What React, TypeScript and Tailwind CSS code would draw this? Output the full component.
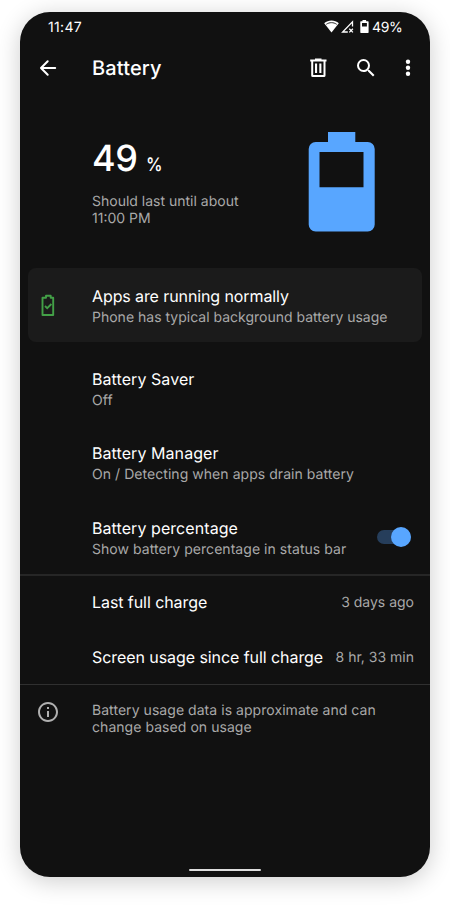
import type { ReactNode } from "react";

function StatusBar() {
  return (
    <div className="flex h-[30px] shrink-0 items-center justify-between pr-[28px] pl-[28px] text-[14px] leading-[17px] text-white">
      <span className="tracking-[0.35px]">11:47</span>
      <div className="flex items-center">
        <svg className="mb-[2px]" width="15" height="13" viewBox="0 0 15 13" fill="none">
          <path d="M7.500 12.600 0.200 3.200C4.200-.300 10.800-.300 14.800 3.200Z" fill="#fff" />
          <path d="M2.300 4.300C5.500 2.100 9.500 2.100 12.700 4.300" stroke="#111" strokeWidth="0.9" />
        </svg>
        <svg className="mb-[2px] ml-[2px]" width="13" height="13" viewBox="0 0 13 13" fill="none">
          <path d="M11.500 6.500V1.800L1.600 12H6.800" stroke="#fff" strokeWidth="1.300" />
          <path d="m8.300 8.800 3.600 3.600m0-3.600-3.600 3.600" stroke="#fff" strokeWidth="1.300" />
        </svg>
        <svg className="mb-px ml-[6px]" width="9" height="13" viewBox="0 0 9 13" fill="#fff">
          <path
            fillRule="evenodd"
            d="M2.500 0h3.600v1.300H8a.6.6 0 0 1 .6.6v10.400a.6.6 0 0 1-.6.6H.9a.6.6 0 0 1-.6-.6V1.900a.6.6 0 0 1 .6-.6h1.600ZM2 3v3.400H6.900V3Z"
          />
        </svg>
        <span className="-mr-[0.500px] ml-[2.500px] tracking-[-0.3px]">49%</span>
      </div>
    </div>
  );
}

function Header() {
  return (
    <div className="flex h-[52px] shrink-0 items-center pl-[16px] text-white">
      <svg width="24" height="24" viewBox="0 0 24 24" fill="none" stroke="#fff" strokeWidth="2">
        <path d="M19.200 12H5.300M11.700 5.300 5 12l6.700 6.700" strokeLinecap="round" strokeLinejoin="round" />
      </svg>
      <h1 className="ml-[32px] flex-1 text-[20px] leading-6 font-medium tracking-[0.15px]">Battery</h1>
      <svg width="24" height="24" viewBox="0 0 24 24" fill="#fff">
        <path
          fillRule="evenodd"
          d="M9 2.500h6.500v1h5v2h-1v14a1.500 1.500 0 0 1-1.500 1.500H6.700a1.500 1.500 0 0 1-1.500-1.500v-14h-1v-2H9ZM7.200 5.500v13.500h10.300V5.500ZM9 7.500h2.100v9.500H9ZM13.300 7.500h2.100v9.500h-2.100Z"
        />
      </svg>
      <svg className="ml-[24px]" width="24" height="24" viewBox="0 0 24 24" fill="#fff">
        <path d="M15.500 14h-.79l-.28-.27A6.471 6.471 0 0 0 16 9.500 6.500 6.500 0 1 0 9.500 16c1.610 0 3.090-.59 4.230-1.570l.27.28v.79l5 4.990L20.490 19l-4.990-5zm-6 0C7.010 14 5 11.990 5 9.500S7.010 5 9.500 5 14 7.010 14 9.500 11.990 14 9.500 14z" />
      </svg>
      <svg className="mr-[10px] ml-[18px]" width="24" height="24" viewBox="0 0 24 24" fill="#fff">
        <circle cx="12" cy="5.800" r="2.200" />
        <circle cx="12" cy="11.800" r="2.200" />
        <circle cx="12" cy="17.800" r="2.200" />
      </svg>
    </div>
  );
}

function Hero() {
  return (
    <div className="flex h-[174px] shrink-0 justify-between pr-[55px] pl-[72px]">
      <div className="pt-[42px]">
        <div className="flex items-baseline text-white">
          <span className="text-[36px] leading-[44px] font-medium tracking-[-0.5px]">49</span>
          <span className="ml-[9px] origin-left scale-x-90 text-[18.500px] font-medium">%</span>
        </div>
        <p className="mt-[13px] text-[14px] leading-[17px] text-[#a9a9a9]">
          Should last until about
          <br />
          11:00 PM
        </p>
      </div>
      <svg className="mt-[38px]" width="67" height="100" viewBox="0 0 67 100" fill="#58a6ff">
        <path
          fillRule="evenodd"
          d="M20 0H47.300V10H59.700a7 7 0 0 1 7 7V92.500a7 7 0 0 1-7 7H7.700a7 7 0 0 1-7-7V17a7 7 0 0 1 7-7H20ZM11.500 20V55.300H55.500V20Z"
        />
      </svg>
    </div>
  );
}

function Item({ title, detail, end }: { title: string; detail: string; end?: ReactNode }) {
  return (
    <div className="flex h-[74.500px] shrink-0 items-start justify-between pt-[18px] pr-[19.500px] pl-[72px]">
      <div>
        <div className="text-[16px] leading-[19px] tracking-[0.07px] text-white">{title}</div>
        <div className="mt-[3px] text-[14px] leading-[17px] tracking-[0.05px] text-[#a9a9a9]">{detail}</div>
      </div>
      {end}
    </div>
  );
}

function Stat({ label, value }: { label: string; value: string }) {
  return (
    <div className="flex h-[55px] shrink-0 items-center justify-between pr-[16px] pl-[72px] first:h-[53px] last:pt-[1px]">
      <span className="text-[16px] leading-[19px] tracking-[-0.07px] text-white">{label}</span>
      <span className="text-[14px] leading-[17px] text-[#a9a9a9]">{value}</span>
    </div>
  );
}

function Toggle() {
  return (
    <div className="mt-[11px] flex h-[14px] w-[33.500px] items-center justify-end rounded-full bg-[#263e5b]">
      <div className="size-[20px] shrink-0 rounded-full bg-[#58a6ff]" />
    </div>
  );
}

export default function App() {
  return (
    <div className="h-[906px] w-[450px] overflow-hidden bg-white px-[20px] pt-[12px] font-['Inter',sans-serif] [text-rendering:geometricPrecision]">
      <main className="flex h-[865.300px] w-[410px] flex-col rounded-[30px] bg-[#111111] shadow-[0_4px_24px_rgba(0,0,0,0.2)]">
        <StatusBar />
        <Header />
        <Hero />
        <section className="mx-[8px] flex h-[74px] shrink-0 items-center rounded-[8px] bg-[#1b1b1b] pl-[8px]">
          <svg width="24" height="24" viewBox="0 0 24 24" fill="none" stroke="#43a047">
            <path d="M10 2.700H14.700V4.700H17.200V22H6.500V4.700H10Z" strokeWidth="1.900" strokeLinejoin="round" />
            <path d="m9 13 2.200 2.200 4.200-4.200" strokeWidth="1.800" />
          </svg>
          <div className="ml-[32px] pt-[2px]">
            <div className="text-[16px] leading-[19px] tracking-[-0.1px] text-white">
              Apps are running normally
            </div>
            <div className="mt-[3px] text-[14px] leading-[17px] text-[#a9a9a9]">
              Phone has typical background battery usage
            </div>
          </div>
        </section>
        <section className="flex h-[234px] shrink-0 flex-col border-b-2 border-[#262626] pt-[9.500px]">
          <Item title="Battery Saver" detail="Off" />
          <Item title="Battery Manager" detail="On / Detecting when apps drain battery" />
          <Item
            title="Battery percentage"
            detail="Show battery percentage in status bar"
            end={<Toggle />}
          />
        </section>
        <section className="flex flex-col border-b border-[#303030]">
          <Stat label="Last full charge" value="3 days ago" />
          <Stat label="Screen usage since full charge" value="8 hr, 33 min" />
        </section>
        <footer className="flex items-start pt-[15px] pl-[16px]">
          <svg width="24" height="24" viewBox="0 0 24 24" fill="#b0b0b0">
            <path d="M11 7h2v2h-2zm0 4h2v6h-2zm1-9C6.480 2 2 6.480 2 12s4.480 10 10 10 10-4.480 10-10S17.520 2 12 2zm0 18c-4.410 0-8-3.590-8-8s3.590-8 8-8 8 3.590 8 8-3.590 8-8 8z" />
          </svg>
          <p className="ml-[32px] pt-[2px] text-[14px] leading-[17px] tracking-[0.05px] text-[#a9a9a9]">
            Battery usage data is approximate and can
            <br />
            change based on usage
          </p>
        </footer>
        <div className="mx-auto mt-auto mb-[6px] h-[2.300px] w-[72px] shrink-0 rounded-full bg-[#dedede]" />
      </main>
    </div>
  );
}
